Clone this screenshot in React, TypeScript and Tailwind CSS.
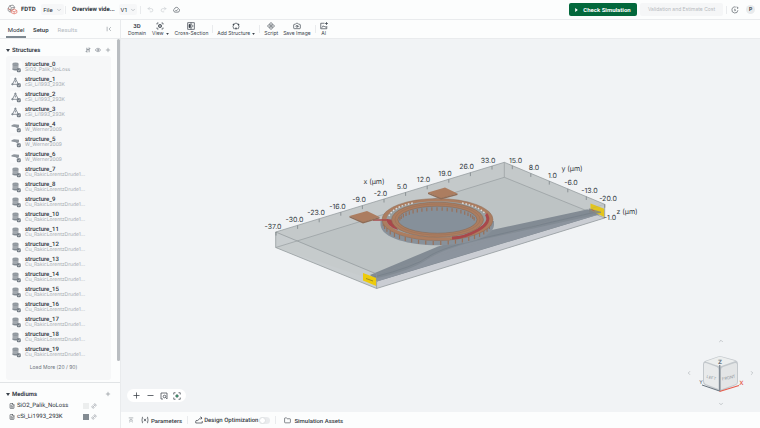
import {
  Camera,
  ChevronDown,
  ChevronLeft,
  ChevronRight,
  ChevronUp,
  Eye,
  FileText,
  Folder,
  Link2,
  Minus,
  Plus,
  Redo2,
  Undo2,
} from "lucide-react";
import type { ReactNode } from "react";

const STRUCTURES = [
  { material: "SiO2_Palik_NoLoss", shape: "cylinder" },
  ...Array.from({ length: 3 }, () => ({ material: "cSi_Li1993_293K", shape: "poly" })),
  ...Array.from({ length: 3 }, () => ({ material: "W_Werner2009", shape: "slab" })),
  ...Array.from({ length: 13 }, () => ({ material: "Cu_RakicLorentzDrude1...", shape: "cylinder" })),
];

const X_LABELS = ["-37.0", "-30.0", "-23.0", "-16.0", "-9.0", "-2.0", "5.0", "12.0", "19.0", "26.0", "33.0"];
const Y_LABELS = ["15.0", "8.0", "1.0", "-6.0", "-13.0", "-20.0"];

const Logo = () => (
  <svg viewBox="0 0 20 20" className="size-[11px]" fill="none" strokeWidth="1.3">
    <path d="M2 8 5 3l6-1 3 4-2 4-6 1-4-3Zm0 0v4l4 3v-4M5 3l3 4 6-1M8 7l-2 4" stroke="#77797c" />
    <path d="m8 12 5-3 5 3v4l-5 2-5-2v-4Zm0 0 5 2 5-2m-5 2v4M2 8l6 4" stroke="#e27468" />
  </svg>
);

const ShapeIcon = ({ shape }: { shape: string }) => (
  <svg viewBox="0 0 12 12" className="size-[12px] shrink-0">
    <rect width="12" height="12" rx="1.5" fill="#fafbfc" />
    {shape === "cylinder" && (
      <g fill="#9299a0">
        <path d="M2.5 2.5v6c0 1.4 6 1.4 6 0v-6Z" fill="#a3a9af" />
        <ellipse cx="5.5" cy="2.7" rx="3" ry="1.1" />
        <path d="M2.5 3.400q3 1 6 0v.700q-3 1-6 0ZM2.500 7.500q3 1 6 0v1.100q-3 1.400-6 0Z" fill="#7f878f" />
      </g>
    )}
    {shape === "poly" && (
      <g fill="none" stroke="#7f8890" strokeWidth=".9">
        <path d="M5.400 2.500 2.400 8.300h6Z" />
        <circle cx="5.4" cy="2.6" r=".6" fill="#878f97" />
        <circle cx="2.4" cy="8.2" r=".7" fill="#878f97" />
        <path d="M5.4 4.5v2" />
      </g>
    )}
    {shape === "slab" && (
      <path d="M1.5 4.2 4 3.2l5 .5v2.6l-2 .9-1.2-.9-4.3-.8Z" fill="#8f969d" />
    )}
    <rect x="6.800" y="7.200" width="4" height="4" rx="1.200" fill="#727b84" />
    <path d="m7.8 9.3.8.7 1.3-1.6" stroke="#fff" strokeWidth=".6" fill="none" />
  </svg>
);

const Caret = () => (
  <svg viewBox="0 0 4 3" className="h-[3px] w-[4px]">
    <path d="M0 0h4L2 3Z" fill="#3a424b" />
  </svg>
);

const iconProps = {
  viewBox: "0 0 16 16",
  className: "size-[8px]",
  fill: "none",
  stroke: "currentColor",
  strokeWidth: 1.4,
};

const ViewIcon = () => (
  <svg {...iconProps}>
    <path d="M2 5V2h3M11 2h3v3M14 11v3h-3M5 14H2v-3" />
    <path d="m8 4.500 3 1.700v3.600L8 11.500 5 9.800V6.200Z" fill="currentColor" fillOpacity=".5" />
  </svg>
);
const SectionIcon = () => (
  <svg {...iconProps}>
    <rect x="1.5" y="1.5" width="13" height="13" />
    <path d="M8 1v14" />
    <path d="M4 5h2.500v6H4Z" fill="currentColor" />
    <path d="m9.500 5 3 3-3 3" />
  </svg>
);
const StructureIcon = () => (
  <svg {...iconProps}>
    <path d="M5 13.500H3.500L2 9l1.500-4.500L8 2l4.500 2.500L14 9l-1.500 4.500H11" />
    <path d="M8 10.500v5M5.500 13h5" />
    <circle cx="3" cy="5" r="1" fill="currentColor" />
    <circle cx="13" cy="5" r="1" fill="currentColor" />
  </svg>
);
const ScriptIcon = () => (
  <svg {...iconProps}>
    <path d="m8 1 3 3-3 3-3-3ZM4 5l3 3-3 3-3-3ZM12 5l3 3-3 3-3-3ZM8 9l3 3-3 3-3-3Z" />
  </svg>
);
const AiIcon = () => (
  <svg {...iconProps}>
    <path d="M9 2.500H1.500v11h12V8M3.500 11.500l3-4 2 2.500 1.500-1.500 2 3M13 0v6M10 3h6" />
  </svg>
);

const Tool = ({ icon, label, menu }: { icon: ReactNode; label: string; menu?: boolean }) => (
  <button className="flex flex-col items-center text-[#3a424b]">
    <span className="flex h-[9px] items-center text-[6px] leading-[9px] font-semibold">{icon}</span>
    <span className="flex items-center gap-[2px] font-['Inter',sans-serif] text-[5px] leading-[7px]">
      {label}
      {menu && (
        <svg viewBox="0 0 4 3" className="h-[2px] w-[3px]">
          <path d="M0 0h4L2 3Z" fill="#3a424b" />
        </svg>
      )}
    </span>
  </button>
);

const Divider = () => <span className="block h-[8px] w-px bg-[#e9ebed]" />;

const TopBar = () => (
  <header className="flex h-[20px] shrink-0 items-center border-b border-[#e9ebed] pr-[5px] pl-[7px]">
    <Logo />
    <span className="ml-[3px] w-[20px] font-bold">FDTD</span>
    <button className="flex h-[11px] w-[23px] items-center justify-center gap-[3px] rounded-[2px] bg-[#f6f7f8]">
      File
      <ChevronDown size={6} className="text-[#8f969d]" />
    </button>
    <span className="ml-[1px]">
      <Divider />
    </span>
    <span className="ml-[6px] w-[47px] font-bold whitespace-nowrap">Overview vide...</span>
    <button className="flex h-[11px] w-[18px] items-center justify-center gap-[2px] rounded-[2px] bg-[#f6f7f8]">
      V1
      <ChevronDown size={6} className="text-[#8f969d]" />
    </button>
    <div className="ml-[3px] flex items-center gap-[6px] text-[#c3c8cc]">
      <Divider />
      <button aria-label="Undo">
        <Undo2 size={7} />
      </button>
      <button aria-label="Redo">
        <Redo2 size={7} />
      </button>
      <svg viewBox="0 0 16 16" className="size-[7px] text-[#4b535b]" fill="none" stroke="currentColor" strokeWidth="1.5">
        <path d="M4.500 14a4 4 0 0 1-1-7.500A4.800 4.800 0 0 1 12.500 6 4.200 4.200 0 0 1 11.500 14ZM5.500 9.500l2 2L11 7.500" />
      </svg>
    </div>
    <div className="ml-auto flex items-center">
      <button className="flex h-[13px] w-[68px] items-center justify-center gap-[5px] rounded-[2px] bg-[#03683c] font-bold text-white">
        <svg viewBox="0 0 4 6" className="h-[4px] w-[3px]">
          <path d="M0 0 4 3 0 6Z" fill="white" />
        </svg>
        Check Simulation
      </button>
      <button disabled className="ml-[3px] h-[13px] w-[83px] rounded-[2px] bg-[#f5f6f7] font-['Inter',sans-serif] text-[5px] text-[#b5babe]">
        Validation and Estimate Cost
      </button>
      <span className="ml-[3px]">
        <Divider />
      </span>
      <svg viewBox="0 0 16 16" className="ml-[4px] size-[8px]" fill="none" stroke="#4b535b" strokeWidth="1.3">
        <path d="M9.500 2.200A6 6 0 1 0 13.800 8.500M7.500 5.500v4l2.500-2" />
        <path d="m11 2 3 1-1 3" />
      </svg>
      <button className="ml-[7px] size-[9px] rounded-full bg-[#e8ebed] text-[5px] leading-[9px] font-semibold">P</button>
    </div>
  </header>
);

const MEDIUMS = [
  { name: "SiO2_Palik_NoLoss", swatch: "bg-[#eceeee]" },
  { name: "cSi_Li1993_293K", swatch: "bg-[#838b92]" },
];

const Sidebar = () => (
  <aside className="flex w-[121px] shrink-0 flex-col border-r border-[#e9ebed]">
    <nav className="flex h-[19px] shrink-0 items-stretch border-b border-[#e9ebed] pr-[8px] pl-[6px]">
      <button className="w-[20px] border-b-2 border-[#7d8890] pt-[2px]">Model</button>
      <button className="ml-[7px] font-medium">Setup</button>
      <button className="ml-[9px] text-[#b4babf]">Results</button>
      <button aria-label="Collapse sidebar" className="ml-auto text-[#8f969d]">
        <svg viewBox="0 0 8 8" className="size-[6px]" fill="none" stroke="currentColor" strokeWidth=".9">
          <path d="M1.500 1v6M6.500 1.500 4 4l2.500 2.500" />
        </svg>
      </button>
    </nav>
    <div className="flex min-h-0 flex-1 border-b border-[#e1e4e6]">
      <div className="min-w-0 flex-1 overflow-hidden pr-[6px] pl-[6px]">
        <div className="flex h-[17px] items-center pt-[5px] text-[#3a424b]">
          <Caret />
          <h2 className="ml-[2px] font-bold">Structures</h2>
          <div className="ml-auto flex items-center gap-[4px] text-[#68717a]">
            <button aria-label="Sort">
              <svg viewBox="0 0 8 8" className="size-[6px]" fill="none" stroke="currentColor" strokeWidth=".9">
                <path d="M2.500 1v6L1 5.500M5.500 7V1L7 2.500M2.500 3.500h3" />
              </svg>
            </button>
            <button aria-label="Visibility">
              <Eye size={6} />
            </button>
            <button aria-label="Add structure">
              <Plus size={6} />
            </button>
          </div>
        </div>
        <div className="rounded-[3px] bg-[#f6f7f8] pt-[3px] pb-[3px] pl-[4px]">
          <ul>
            {STRUCTURES.map(({ material, shape }, i) => (
              <li key={i} className="flex h-[15px] items-center gap-[3px]">
                <ShapeIcon shape={shape} />
                <div>
                  <p className="leading-[7px] font-medium">structure_{i}</p>
                  <p className="font-['Inter',sans-serif] text-[5px] leading-[5px] text-[#a5abb1]">{material}</p>
                </div>
              </li>
            ))}
          </ul>
          <button className="block h-[18px] w-full pr-[14px] text-center font-['Inter',sans-serif] text-[5px] text-[#6b737b]">
            Load More (20 / 90)
          </button>
        </div>
      </div>
      <div className="h-[322px] w-[3px] shrink-0 rounded-[2px] bg-[#b9bdc1]" />
    </div>
    <section className="h-[45px] shrink-0 pt-[5px] pr-[9px] pl-[6px]">
      <div className="flex h-[12px] items-center text-[#3a424b]">
        <Caret />
        <h2 className="ml-[2px] font-bold">Mediums</h2>
        <button aria-label="Add medium" className="ml-auto text-[#68717a]">
          <Plus size={6} />
        </button>
      </div>
      {MEDIUMS.map(({ name, swatch }) => (
        <div key={name} className="flex h-[11px] items-center pl-[3px]">
          <FileText size={6} />
          <span className="ml-[2px] flex-1">{name}</span>
          <span className={`size-[6px] ${swatch}`} />
          <Link2 size={6} className="mr-[14px] ml-[2px] -rotate-45 text-[#7c848c]" />
        </div>
      ))}
    </section>
  </aside>
);

const Toolbar = () => (
  <div className="flex h-[19px] shrink-0 items-center border-b border-[#e9ebed] pl-[7px]">
    <div className="flex items-center gap-[6px]">
      <Tool icon="3D" label="Domain" />
      <Tool icon={<ViewIcon />} label="View" menu />
      <Tool icon={<SectionIcon />} label="Cross-Section" />
    </div>
    <div className="ml-[4px] flex items-center gap-[4px]">
      <Divider />
      <Tool icon={<StructureIcon />} label="Add Structure" menu />
    </div>
    <div className="ml-[4px] flex items-center gap-[4px]">
      <Divider />
      <Tool icon={<ScriptIcon />} label="Script" />
    </div>
    <div className="ml-[5px] flex items-center gap-[4px]">
      <Tool icon={<Camera size={8} />} label="Save Image" />
      <Divider />
      <Tool icon={<AiIcon />} label="AI" />
    </div>
  </div>
);

// Posts hanging below an elliptical ring, between two angles in degrees
const Posts = ({ rx, ry, cy, from, to, length }: { rx: number; ry: number; cy: number; from: number; to: number; length: number }) => {
  const count = Math.round((to - from) / 8);
  return (
    <g stroke="#997059" strokeWidth="1.2">
      {Array.from({ length: count + 1 }, (_, i) => {
        const a = ((from + ((to - from) * i) / count) * Math.PI) / 180;
        const x = 437 + rx * Math.cos(a);
        const y = cy + ry * Math.sin(a);
        return <path key={i} d={`M${x} ${y}v${length}`} />;
      })}
    </g>
  );
};

const Model = () => (
  <svg
    viewBox="121 39 639 373"
    className="size-full"
    fontFamily="Inter, sans-serif"
    fontSize="7"
    textAnchor="middle"
    fill="#343b43"
    role="img"
    aria-label="Ring modulator"
  >
    {/* simulation domain */}
    <path d="M275.700 232 504.300 162.300 604.700 204.300V218L376.600 288.500 275.700 247.500Z" fill="#c4c9ca" />
    <path d="M275.700 247.500 504.300 177.300 604.700 218 376.600 281Z" fill="#bdc3c4" />
    <path d="M275.700 232 376.600 274V288.500L275.700 247.500Z" fill="#cbd0d1" fillOpacity=".65" />
    <path d="M376.600 281 604.700 213V218L376.600 288.500Z" fill="#cacdd3" />
    <g fill="none" stroke="#8f9699" strokeWidth=".6">
      <path d="M275.700 247.500 504.300 177.300 604.700 218M504.300 162.300v15" />
    </g>

    {/* waveguide */}
    <path d="M370 275 438 246.500 494 229.500 587 209.500 602 211V213.500L377 281.500Z" fill="#828b94" />
    <path d="M377 278Q410 271 428 259T494 237L602 213.500 440 262 377 281.500Z" fill="#8c949e" />
    <path d="M374 277Q414 267 428 257T492 236L600 211" fill="none" stroke="#6f7982" strokeWidth=".5" />

    {/* ring */}
    <path d="M380.500 221H494V225C492 252 383 252 380.500 225Z" fill="#88919a" />
    <Posts rx={54} ry={21} cy={220} from={6} to={174} length={4} />
    <ellipse cx="437.500" cy="219.500" rx="55.500" ry="21" fill="#ac7d60" />
    <ellipse cx="437.500" cy="219.500" rx="55.500" ry="21" fill="none" stroke="#85644f" strokeWidth=".4" />
    <ellipse cx="437.500" cy="219.500" rx="51" ry="18.300" fill="#989e9f" />
    <path d="M389 216Q393 207 413 203M462 203Q484 208 486 216" fill="none" stroke="#d8dbdc" strokeWidth="1.500" strokeDasharray="1.600 1.700" />
    <path d="M386.500 219Q386 226 398 230L395 224 391 219.500Z" fill="#a9484b" />
    <path d="M373 220H388" stroke="#a9484b" strokeWidth="1.500" />
    <path d="M486 214Q492 222 478 230T452 238" fill="none" stroke="#a9484b" strokeWidth="3" />
    <path d="M387 226Q402 239 450 239" fill="none" stroke="#ac7d60" strokeWidth="2.500" />
    <ellipse cx="437.500" cy="219.700" rx="46" ry="17.500" fill="#ac7d60" />
    <ellipse cx="437.500" cy="219.700" rx="46" ry="17.500" fill="none" stroke="#85644f" strokeWidth=".5" />
    <ellipse cx="437.500" cy="219.500" rx="42.500" ry="15.500" fill="none" stroke="#8f6c56" strokeWidth=".4" />
    <ellipse cx="437.500" cy="219.700" rx="39.500" ry="13.500" fill="#86909a" />
    <Posts rx={38} ry={12.500} cy={219.700} from={192} to={348} length={3.500} />
    <ellipse cx="437.500" cy="219.700" rx="39.500" ry="13.500" fill="none" stroke="#85644f" strokeWidth=".5" />

    {/* contact pads */}
    <path d="M349.500 216 367 211 379.500 217 363 222.500Z" fill="#ac7d60" />
    <path d="M349.500 216 363 222V223.500L349.500 217.500ZM363 222 379.500 217V218.500L363 223.500Z" fill="#8f6c56" />
    <path d="M428 192.500 445 187.500 457.500 193.500 441 198.500Z" fill="#ac7d60" />
    <path d="M428 192.500 441 198V199.500L428 194ZM441 198 457.500 193.500V195L441 199.500Z" fill="#8f6c56" />

    {/* ports */}
    <path d="M363 273 376.300 278V286L363 280.500Z" fill="#edcb0b" />
    <path d="m366 278.500 7 2.500" stroke="#8e8022" strokeWidth=".8" />
    <path d="M590.500 203.500 604.200 208.700V217L590.500 210.500Z" fill="#e2c51d" />
    <path d="M589 208.500 601 211.800V213L596 213.500 589 212.500Z" fill="#80858a" fillOpacity=".85" />
    <path d="m591.500 209.500 3 1.500" stroke="#b06b50" />

    <g fill="none" stroke="#8f9699" strokeWidth=".7">
      <path d="M275.700 232 504.300 162.300 604.700 204.300V218L376.600 288.500 275.700 247.500ZM275.700 232 376.600 274V288.500" />
      <path d="M376.600 274 604.700 204.300" strokeOpacity=".3" />
      {X_LABELS.map((label, i) => (
        <path key={label} d={`M${276 + i * 21.6} ${232 - i * 6.6}v3.500`} stroke="#737b80" />
      ))}
      {Y_LABELS.map((label, i) => (
        <path key={label} d={`M${512.3 + i * 18.5} ${165.700 + i * 7.7}v3.500`} stroke="#737b80" />
      ))}
    </g>
    {X_LABELS.map((label, i) => (
      <text key={label} x={273 + i * 21.5} y={228.500 - i * 6.6}>
        {label}
      </text>
    ))}
    {Y_LABELS.map((label, i) => (
      <text key={label} x={515.500 + i * 18.5} y={162.500 + i * 7.6}>
        {label}
      </text>
    ))}
    <text x="374" y="184">x (μm)</text>
    <text x="572" y="171">y (μm)</text>
    <text x="627" y="214">z (μm)</text>
    <text x="610" y="220">-1.0</text>
  </svg>
);

const ViewCube = () => (
  <div className="absolute right-[4px] bottom-[4px] grid grid-cols-[8px_55px_8px] grid-rows-[8px_55px_8px] place-items-center text-[#969ca1]">
    <ChevronUp size={6} className="col-start-2" />
    <ChevronLeft size={6} className="row-start-2" />
    <svg viewBox="698 350 46 44" className="row-start-2 h-[44px] w-[46px]" fontFamily="Inter, sans-serif" textAnchor="middle">
      <path d="M703 363Q703 361 705 360L718 355.500Q720 355 722 355.500L735 359Q738 360 738 363V381Q738 383 736 384L720 390.500 705 384Q703 383 703 381Z" fill="#c3c8cc" />
      <path d="m705.500 360.500 13-4.500h3L735.500 360 720 365.500Z" fill="#eceeee" />
      <path d="M704 363Q704 361.500 706 362L717 366Q718.500 367 718.500 369V388L705.500 383Q704 382 704 380Z" fill="#e8eaeb" />
      <path d="M721 369Q721 367 723 366L735 362Q737 361.500 737 363.500V381Q737 383 735 383.500L721 388.500Z" fill="#e3e5e6" />
      <path d="M719.700 364V390" stroke="#828c96" strokeWidth="1.400" />
      <path d="M702 384 719.500 390" stroke="#69737d" />
      <path d="M719.500 390.500 739 384.500" stroke="#e65b4a" strokeWidth="1.300" />
      <text x="720" y="363" fontSize="6" fontWeight="700" fill="#69737d">Z</text>
      <text x="711" y="378" fontSize="4" fill="#8d949a" transform="rotate(14 711 378)">LEFT</text>
      <text x="729" y="378" fontSize="4" fill="#8d949a" transform="rotate(-12 729 378)">FRONT</text>
      <text x="701" y="383" fontSize="5" fill="#434b53">Y</text>
      <text x="741.500" y="384" fontSize="6" fontWeight="600" fill="#e65b4a">X</text>
    </svg>
    <ChevronRight size={6} className="row-start-2" />
    <ChevronDown size={6} className="col-start-2" />
  </div>
);

const ZoomControls = () => (
  <div className="absolute bottom-[10px] left-[6px] flex h-[13px] items-center gap-[5px] rounded-full bg-white px-[5px] text-[#343b43]">
    <button aria-label="Zoom in">
      <Plus size={9} />
    </button>
    <button aria-label="Zoom out">
      <Minus size={9} />
    </button>
    <button aria-label="Zoom to area">
      <svg {...iconProps}>
        <path d="M6 14H2V2h12v12" />
        <circle cx="9" cy="9" r="2.600" />
        <path d="m11 11 2.500 2.500" />
      </svg>
    </button>
    <button aria-label="Fit to view">
      <svg {...iconProps}>
        <path d="M1.500 5V1.500H5M11 1.500h3.500V5M14.500 11v3.500H11M5 14.500H1.500V11" />
        <path d="M8 4v2M8 10v2M4 8h2M10 8h2" />
        <circle cx="8" cy="8" r="1.600" fill="#03683c" stroke="#03683c" />
      </svg>
    </button>
  </div>
);

const BottomBar = () => (
  <footer className="flex h-[16px] shrink-0 items-center pl-[7px] font-medium text-[#343b43]">
    <button aria-label="Expand panel">
      <svg viewBox="0 0 8 8" className="size-[6px]" fill="none" stroke="#8f969d" strokeWidth=".9">
        <path d="M1 1.200h6M1.500 7 4 4.800 6.500 7M1.500 4.800 4 2.600l2.500 2.200" />
      </svg>
    </button>
    <button className="ml-[7px] flex items-center gap-[2px]">
      <svg {...iconProps}>
        <path d="M4 2Q2.500 2 2.500 4v2.500L1 8l1.500 1.500V12q0 2 1.500 2M12 2q1.500 0 1.500 2v2.500L15 8l-1.500 1.500V12q0 2-1.500 2M6 5.500l4 5M10 5.500l-4 5" />
      </svg>
      Parameters
    </button>
    <span className="ml-[5px]">
      <Divider />
    </span>
    <label className="ml-[7px] flex items-center">
      <svg {...iconProps}>
        <path d="M1.500 9.500V14h13V10M2 9q4 1 6-2.500T14 4M11 1.500 14 4l-2.500 3" />
      </svg>
      <span className="ml-[1px]">Design Optimization</span>
      <input
        type="checkbox"
        role="switch"
        className="ml-[1px] h-[7px] w-[11px] appearance-none rounded-full bg-[#e9ebed] before:block before:size-[7px] before:rounded-full before:border before:border-[#dde0e2] before:bg-white"
      />
    </label>
    <span className="ml-[5px]">
      <Divider />
    </span>
    <button className="ml-[8px] flex items-center gap-[3px]">
      <Folder size={7} />
      Simulation Assets
    </button>
  </footer>
);

export default function App() {
  return (
    <div className="flex h-screen flex-col overflow-hidden bg-[#fcfdfd] font-['Roboto',sans-serif] text-[6px] text-[#2c333a] [text-rendering:geometricPrecision]">
      <TopBar />
      <div className="flex min-h-0 flex-1">
        <Sidebar />
        <main className="flex min-w-0 flex-1 flex-col">
          <Toolbar />
          <div className="relative min-h-0 flex-1 bg-[#f1f3f5]">
            <Model />
            <ZoomControls />
            <ViewCube />
          </div>
          <BottomBar />
        </main>
      </div>
    </div>
  );
}
